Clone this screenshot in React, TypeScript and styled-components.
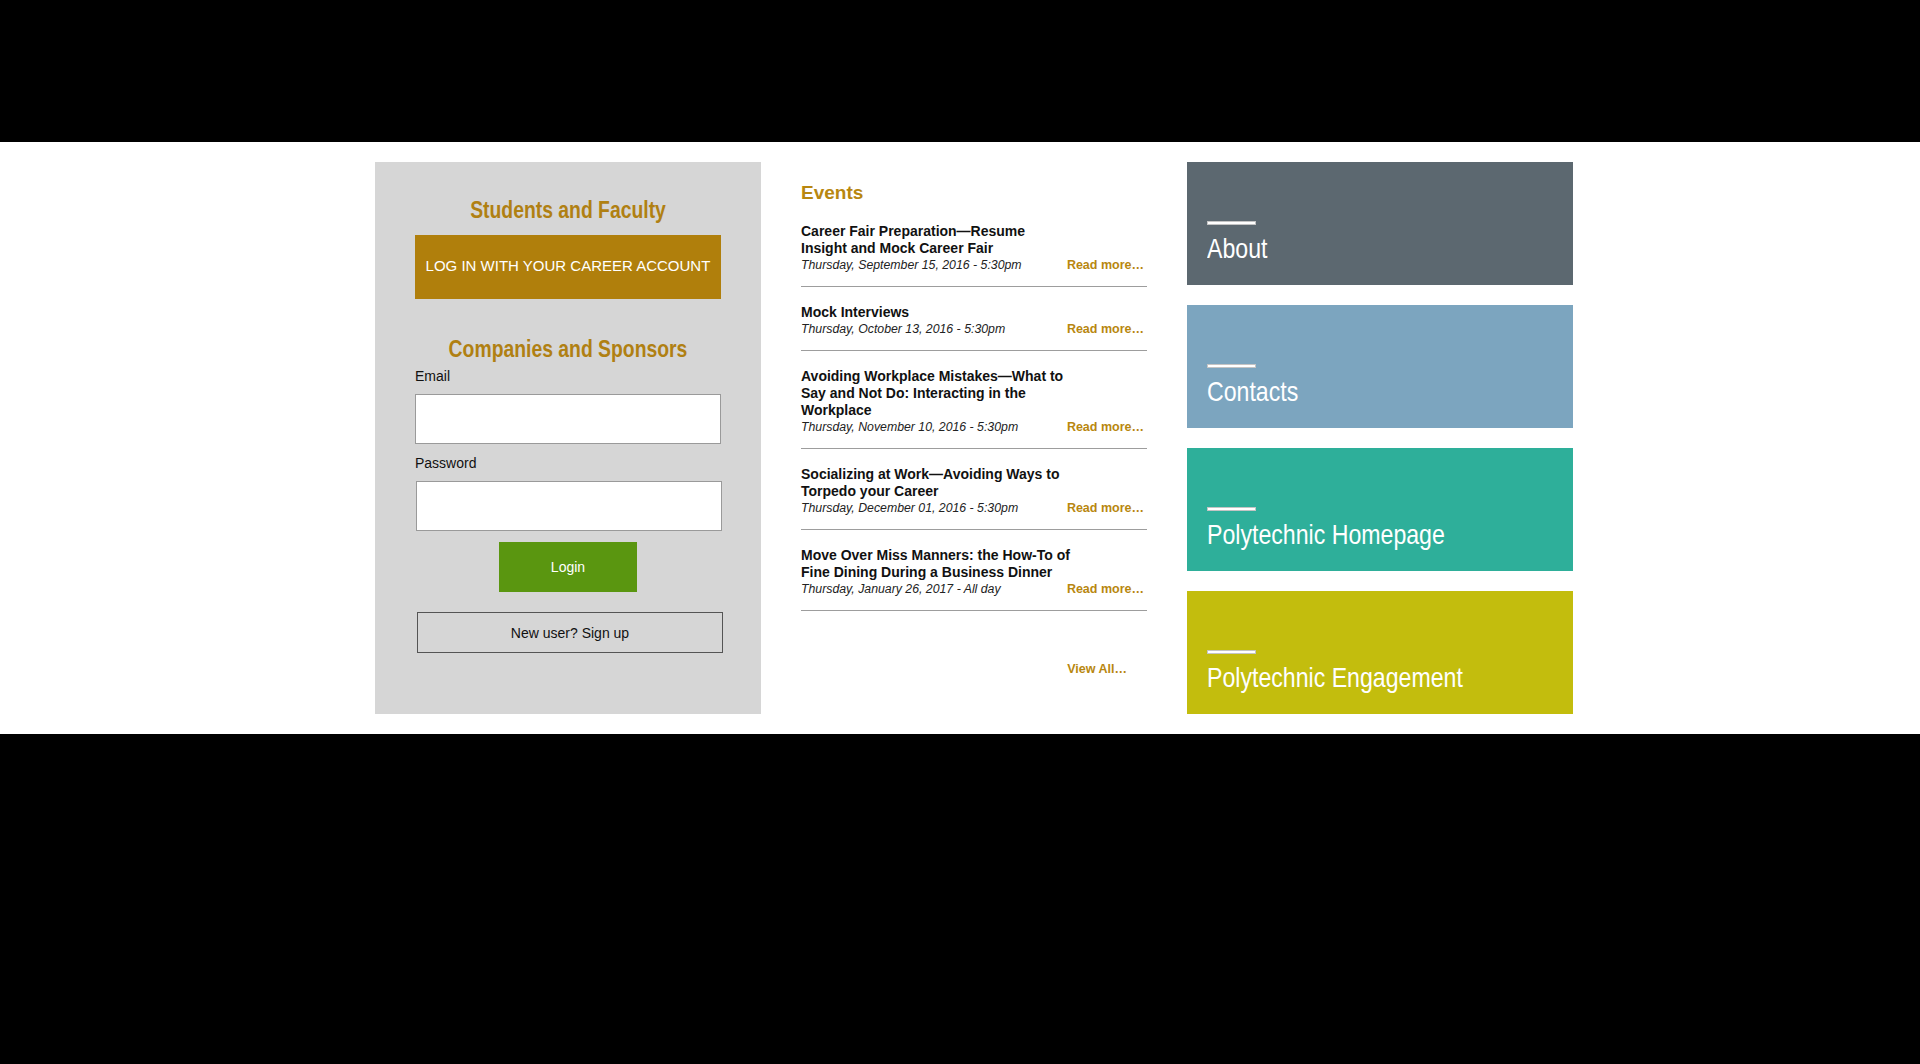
import React from 'react';
import styled, { createGlobalStyle } from 'styled-components';

const GlobalStyle = createGlobalStyle`
  html, body {
    margin: 0;
    padding: 0;
    background: #000;
  }
  body {
    font-family: 'Liberation Sans', Arial, Helvetica, sans-serif;
  }
  * {
    box-sizing: border-box;
  }
`;

// no narrow face is installed, so condensed type is Liberation Sans squeezed horizontally
const Page = styled.div`
  min-height: 100vh;
  background: #000;
`;

const TopBar = styled.header`
  height: 142px;
  background: #000;
`;

const Band = styled.main`
  background: #fff;
  padding: 20px 347px 20px 375px;
`;

const Columns = styled.div`
  display: grid;
  grid-template-columns: 386px 426px 386px;
  height: 552px;
`;

/* ---------- login panel ---------- */

const LoginPanel = styled.section`
  background: #d6d6d6;
  padding: 33px 40px 0 40px;
  display: flex;
  flex-direction: column;
`;

const PanelTitle = styled.h2<{ $gap?: number }>`
  margin: 0 0 ${p => p.$gap ?? 10}px 0;
  font-family: 'Liberation Sans', Arial, sans-serif;
  font-weight: 700;
  font-size: 24.5px;
  line-height: 30px;
  color: #b08012;
  text-align: center;
  white-space: nowrap;
  transform: scaleX(0.79);
  transform-origin: center;
`;

const CareerButton = styled.button`
  height: 64px;
  width: 100%;
  border: none;
  background: #b07f0c;
  color: #fff;
  font-family: 'Liberation Sans', Arial, sans-serif;
  font-size: 15px;
  cursor: pointer;
  padding: 0 0 4px 0;
  margin-bottom: 35px;
`;

const Label = styled.label`
  display: block;
  font-size: 14px;
  line-height: 18px;
  color: #111;
  margin-bottom: 9px;
`;

const TextInput = styled.input<{ $shift?: number }>`
  display: block;
  width: 306px;
  height: 50px;
  margin: 0 0 10px ${p => p.$shift ?? 0}px;
  border: 1px solid #9a9a9a;
  background: #fff;
  font-size: 14px;
  padding: 0 10px;
`;

const LoginButton = styled.button`
  align-self: center;
  width: 138px;
  height: 50px;
  border: none;
  background: #5a9610;
  color: #fff;
  font-family: 'Liberation Sans', Arial, sans-serif;
  font-size: 14px;
  cursor: pointer;
  margin-top: 1px;
  margin-bottom: 20px;
`;

const SignupButton = styled.button`
  width: 306px;
  height: 41px;
  margin-left: 2px;
  border: 1px solid #555;
  background: transparent;
  color: #111;
  font-family: 'Liberation Sans', Arial, sans-serif;
  font-size: 14px;
  cursor: pointer;
`;

/* ---------- events ---------- */

const EventsColumn = styled.section`
  padding: 19px 40px 0 40px;
`;

const EventsTitle = styled.h2`
  margin: 0 0 1px 0;
  font-size: 19px;
  line-height: 24px;
  font-weight: 700;
  color: #b8870f;
`;

const EventItem = styled.article`
  padding: 17px 0 13px 0;
  border-bottom: 1px solid #9d9d9d;
`;

const EventTitle = styled.h3`
  margin: 0;
  max-width: 272px;
  font-size: 14px;
  line-height: 17px;
  font-weight: 700;
  color: #111;
`;

const EventMeta = styled.div`
  display: flex;
  justify-content: space-between;
  align-items: baseline;
  padding-right: 3px;
  height: 16px;
  line-height: 16px;
`;

const EventDate = styled.span`
  font-size: 12.3px;
  font-style: italic;
  color: #222;
`;

const GoldLink = styled.a`
  font-size: 12.5px;
  font-weight: 700;
  color: #b8870f;
  text-decoration: none;
  cursor: pointer;
`;

const ViewAll = styled.div`
  margin-top: 49px;
  text-align: right;
  padding-right: 20px;
  line-height: 16px;
`;

/* ---------- tiles ---------- */

const TileColumn = styled.nav`
  display: grid;
  grid-template-rows: repeat(4, 123px);
  row-gap: 20px;
`;

const Tile = styled.a<{ $bg: string }>`
  display: flex;
  flex-direction: column;
  justify-content: flex-end;
  align-items: flex-start;
  padding: 0 20px 20px 20px;
  background: ${p => p.$bg};
  color: #fff;
  text-decoration: none;
  cursor: pointer;
`;

const TileBar = styled.span`
  display: block;
  width: 49px;
  height: 4px;
  background: #fff;
  border: 1px solid #c4c4c4;
  margin-bottom: 8px;
`;

const TileLabel = styled.span`
  display: inline-block;
  font-family: 'Liberation Sans', Arial, sans-serif;
  font-size: 28px;
  line-height: 32px;
  font-weight: 400;
  white-space: nowrap;
  transform: scaleX(0.826);
  transform-origin: left center;
`;

const events = [
  { title: 'Career Fair Preparation\u2014Resume Insight and Mock Career Fair', date: 'Thursday, September 15, 2016 - 5:30pm' },
  { title: 'Mock Interviews', date: 'Thursday, October 13, 2016 - 5:30pm' },
  { title: 'Avoiding Workplace Mistakes\u2014What to Say and Not Do: Interacting in the Workplace', date: 'Thursday, November 10, 2016 - 5:30pm' },
  { title: 'Socializing at Work\u2014Avoiding Ways to Torpedo your Career', date: 'Thursday, December 01, 2016 - 5:30pm' },
  { title: 'Move Over Miss Manners: the How-To of Fine Dining During a Business Dinner', date: 'Thursday, January 26, 2017 - All day' },
];

const tiles = [
  { label: 'About', bg: '#5c6870' },
  { label: 'Contacts', bg: '#7ca5bf' },
  { label: 'Polytechnic Homepage', bg: '#2eaf9a' },
  { label: 'Polytechnic Engagement', bg: '#c3bd0d' },
];

export default function App() {
  return (
    <Page>
      <GlobalStyle />
      <TopBar />
      <Band>
        <Columns>
          <LoginPanel>
            <PanelTitle>Students and Faculty</PanelTitle>
            <CareerButton>LOG IN WITH YOUR CAREER ACCOUNT</CareerButton>
            <PanelTitle $gap={3}>Companies and Sponsors</PanelTitle>
            <Label htmlFor="email">Email</Label>
            <TextInput id="email" type="email" />
            <Label htmlFor="password">Password</Label>
            <TextInput id="password" type="password" $shift={1} />
            <LoginButton>Login</LoginButton>
            <SignupButton>New user? Sign up</SignupButton>
          </LoginPanel>

          <EventsColumn>
            <EventsTitle>Events</EventsTitle>
            {events.map(ev => (
              <EventItem key={ev.title}>
                <EventTitle>{ev.title}</EventTitle>
                <EventMeta>
                  <EventDate>{ev.date}</EventDate>
                  <GoldLink>Read more…</GoldLink>
                </EventMeta>
              </EventItem>
            ))}
            <ViewAll>
              <GoldLink>View All…</GoldLink>
            </ViewAll>
          </EventsColumn>

          <TileColumn>
            {tiles.map(t => (
              <Tile key={t.label} $bg={t.bg}>
                <TileBar />
                <TileLabel>{t.label}</TileLabel>
              </Tile>
            ))}
          </TileColumn>
        </Columns>
      </Band>
    </Page>
  );
}
